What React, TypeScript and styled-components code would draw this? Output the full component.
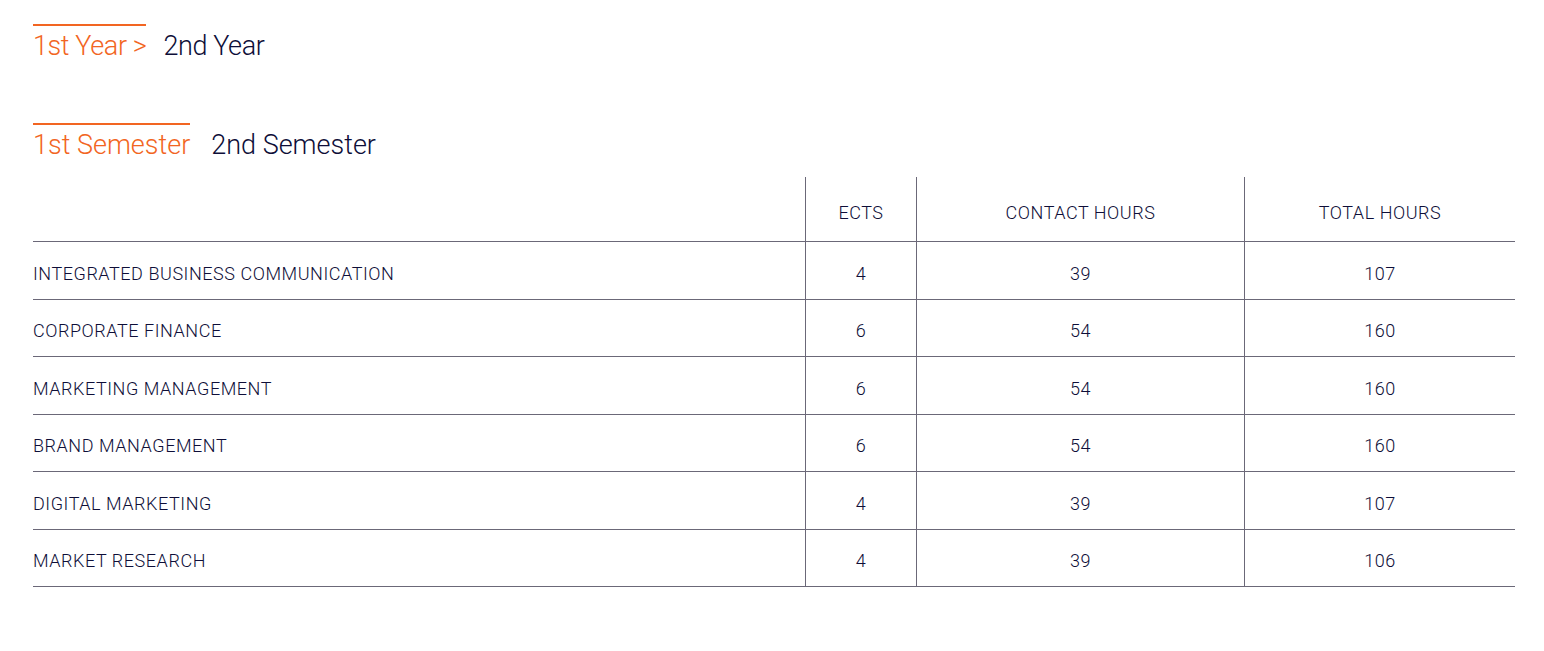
import React from "react";
import styled, { createGlobalStyle } from "styled-components";

const Global = createGlobalStyle`
  html, body { margin: 0; padding: 0; background: #fff; }
  body { font-family: Roboto, "Liberation Sans", sans-serif; color: #0e0e38; }
`;

const Page = styled.div`
  padding: 24px 29px 0 33px;
`;

const Tabs = styled.div<{ $gap: number; $spacing: number }>`
  display: flex;
  gap: ${(p) => p.$gap}px;
  align-items: flex-start;
  letter-spacing: ${(p) => p.$spacing}px;
`;

const Tab = styled.div<{ $active?: boolean }>`
  font-size: 27px;
  font-weight: 300;
  line-height: 32px;
  padding-top: 4px;
  border-top: 2px solid ${(p) => (p.$active ? "#f26522" : "transparent")};
  color: ${(p) => (p.$active ? "#f26522" : "#0e0e38")};
  white-space: nowrap;
`;

const YearTabs = styled(Tabs)`
  margin-bottom: 61px;
`;

const SemesterTabs = styled(Tabs)`
  margin-bottom: 16px;
`;

const Table = styled.div`
  width: 1482px;
  font-size: 18px;
  font-weight: 300;
  letter-spacing: 0.55px;
  color: #0e0e38;
`;

const Row = styled.div<{ $head?: boolean }>`
  display: grid;
  grid-template-columns: 772px 111px 328px 271px;
  height: ${(p) => (p.$head ? "65px" : "57.5px")};
  box-sizing: border-box;
  border-bottom: 1px solid #6b6878;
`;

const Cell = styled.div<{ $left?: boolean }>`
  display: flex;
  align-items: center;
  justify-content: ${(p) => (p.$left ? "flex-start" : "center")};
  padding-top: 6px;
  box-sizing: border-box;
  & + & {
    border-left: 1px solid #6b6878;
  }
`;

const rows: [string, number, number, number][] = [
  ["INTEGRATED BUSINESS COMMUNICATION", 4, 39, 107],
  ["CORPORATE FINANCE", 6, 54, 160],
  ["MARKETING MANAGEMENT", 6, 54, 160],
  ["BRAND MANAGEMENT", 6, 54, 160],
  ["DIGITAL MARKETING", 4, 39, 107],
  ["MARKET RESEARCH", 4, 39, 106],
];

export default function App() {
  return (
    <Page>
      <Global />
      <YearTabs $gap={17} $spacing={-0.4}>
        <Tab $active>1st Year &gt;</Tab>
        <Tab>2nd Year</Tab>
      </YearTabs>
      <SemesterTabs $gap={21} $spacing={0}>
        <Tab $active>1st Semester</Tab>
        <Tab>2nd Semester</Tab>
      </SemesterTabs>
      <Table>
        <Row $head>
          <Cell $left />
          <Cell>ECTS</Cell>
          <Cell>CONTACT HOURS</Cell>
          <Cell>TOTAL HOURS</Cell>
        </Row>
        {rows.map(([name, e, c, t]) => (
          <Row key={name}>
            <Cell $left>{name}</Cell>
            <Cell>{e}</Cell>
            <Cell>{c}</Cell>
            <Cell>{t}</Cell>
          </Row>
        ))}
      </Table>
    </Page>
  );
}
